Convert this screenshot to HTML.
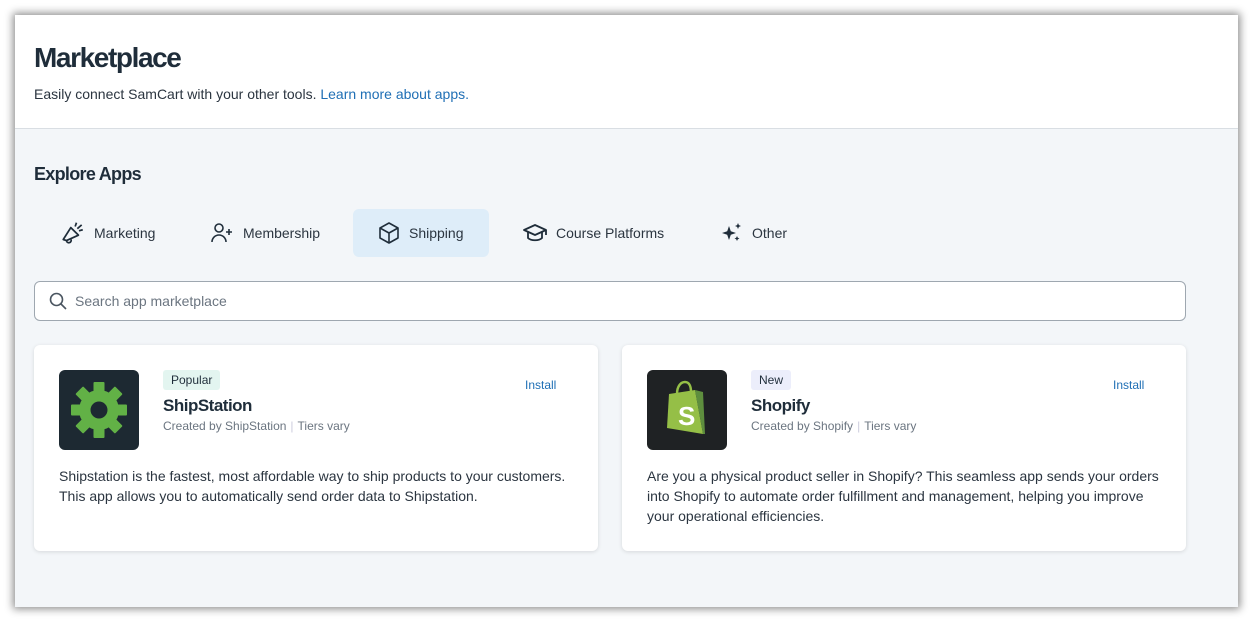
<!DOCTYPE html><html><head><style>
*{box-sizing:border-box;margin:0;padding:0}
body{width:1253px;height:623px;background:#fff;font-family:"Liberation Sans",sans-serif;position:relative;overflow:hidden;color:#1f2d3a}
.win{position:absolute;left:15px;top:15px;width:1223px;height:592px;background:#f3f6f9;box-shadow:0 0 8px 2px rgba(0,0,0,.45);overflow:hidden}
.hdr{position:absolute;left:0;top:0;width:100%;height:114px;background:#fff;border-bottom:1px solid #d9dee3}
.a{position:absolute;white-space:nowrap}
h1{position:absolute;left:19px;top:27px;font-size:28px;font-weight:700;letter-spacing:-1.4px;color:#1f2d3a}
.sub{left:19px;top:71px;font-size:14px;color:#2b3540}
.sub span{color:#1f6fb5}
.tab{position:absolute;top:194px;height:48px;display:flex;align-items:center;font-size:14px;color:#2b3540;padding:0 24px;border-radius:6px}
.tab svg{margin-right:8px}
.search{position:absolute;left:19px;top:266px;width:1152px;height:40px;border:1px solid #9ea7b0;border-radius:6px;background:#fff;font-size:14px;color:#6b7580;padding-left:40px;line-height:38px}
.card{position:absolute;top:330px;width:564px;height:206px;background:#fff;border-radius:6px;box-shadow:0 1px 4px rgba(0,0,0,.12)}
.logo{position:absolute;left:25px;top:25px;width:80px;height:80px;border-radius:6px}
.badge{position:absolute;left:129px;top:25px;height:20px;padding:0 8px;border-radius:3px;font-size:12px;line-height:20px;color:#1f2d3a}
.tt{left:129px;top:51px;font-size:17px;font-weight:700;letter-spacing:-.5px}
.by{left:129px;top:74px;font-size:12px;color:#6b7580}
.by i{font-style:normal;color:#ccd;margin:0 4px}
.ins{left:491px;top:33px;font-size:12px;color:#1f6fb5}
.desc{position:absolute;left:25px;top:121px;width:520px;font-size:14px;line-height:20px;color:#2b3540}
</style></head><body>
<div class="win">
<div class="hdr">
<h1>Marketplace</h1>
<div class="a sub">Easily connect SamCart with your other tools. <span>Learn more about apps.</span></div>
</div>
<div class="a" style="left:19px;top:149px;font-size:18px;font-weight:700;letter-spacing:-.7px">Explore Apps</div>

<div class="tab" style="left:21px"><svg width="26" height="26" viewBox="0 0 24 24" fill="none" stroke="#1f2d3a" stroke-width="1.6" stroke-linejoin="round"><path d="M3 18l7-11 7 7-11 5z"/><path d="M6 19.5a2.2 2.2 0 0 0 4.2-1.5"/><path d="M14 6l1.2-3.5M17.5 10l3.5-1M16 8l4-3.5"/></svg>Marketing</div>
<div class="tab" style="left:170px"><svg width="26" height="24" viewBox="0 0 26 24" fill="none" stroke="#1f2d3a" stroke-width="1.6"><circle cx="10" cy="7" r="4"/><path d="M3 21a7 7 0 0 1 14 0"/><path d="M20 8v6M17 11h6"/></svg>Membership</div>
<div class="tab" style="left:338px;width:136px;background:#deedf9"><svg width="24" height="24" viewBox="0 0 24 24" fill="none" stroke="#1f2d3a" stroke-width="1.6" stroke-linejoin="round"><path d="M12 2l9 5v10l-9 5-9-5V7z"/><path d="M3 7l9 5 9-5M12 12v10"/></svg>Shipping</div>
<div class="tab" style="left:483px"><svg width="26" height="24" viewBox="0 0 26 24" fill="none" stroke="#1f2d3a" stroke-width="1.8" stroke-linejoin="round"><path d="M2 9l11-5 11 5-11 5z"/><path d="M6 11v6c3 3 11 3 14 0v-6M24 9v5"/></svg>Course Platforms</div>
<div class="tab" style="left:681px"><svg width="24" height="24" viewBox="0 0 24 24" fill="#1f2d3a"><path d="M9 5l1.8 5.2L16 12l-5.2 1.8L9 19l-1.8-5.2L2 12l5.2-1.8z"/><path d="M18 2l.9 2.1L21 5l-2.1.9L18 8l-.9-2.1L15 5l2.1-.9z"/><path d="M17 15l.8 1.7 1.7.8-1.7.8L17 20l-.8-1.7-1.7-.8 1.7-.8z"/></svg>Other</div>

<div class="search"><svg style="position:absolute;left:14px;top:10px" width="18" height="18" viewBox="0 0 18 18" fill="none" stroke="#4a5560" stroke-width="1.6"><circle cx="7.5" cy="7.5" r="6"/><path d="M12 12l5 5"/></svg>Search app marketplace</div>

<div class="card" style="left:19px">
<div class="logo" style="background:#1d2932"><svg width="80" height="80" viewBox="0 0 80 80"><g fill="#62b146" transform="translate(40 40)"><circle r="20"/><g id="t"><rect x="-5.5" y="-28" width="11" height="12" rx="1"/></g><use href="#t" transform="rotate(45)"/><use href="#t" transform="rotate(90)"/><use href="#t" transform="rotate(135)"/><use href="#t" transform="rotate(180)"/><use href="#t" transform="rotate(225)"/><use href="#t" transform="rotate(270)"/><use href="#t" transform="rotate(315)"/></g><circle cx="40" cy="40" r="8.5" fill="#1d2932"/></svg></div>
<div class="badge" style="background:#e3f5f0">Popular</div>
<div class="a tt">ShipStation</div>
<div class="a by">Created by ShipStation<i>|</i>Tiers vary</div>
<div class="a ins">Install</div>
<div class="desc">Shipstation is the fastest, most affordable way to ship products to your customers. This app allows you to automatically send order data to Shipstation.</div>
</div>

<div class="card" style="left:607px">
<div class="logo" style="background:#1f2224"><svg width="80" height="80" viewBox="0 0 80 80"><path d="M22 24l26-4 8 44-36-6z" fill="#95bf47"/><path d="M48 20l8 2 2 42-2 0z" fill="#5e8e3e"/><path d="M30 24c0-8 4-12 8-12s6 4 6 10" fill="none" stroke="#95bf47" stroke-width="2.5"/><text x="31" y="55" font-family="Liberation Sans" font-weight="700" font-size="26" fill="#fff">S</text></svg></div>
<div class="badge" style="background:#eceefb">New</div>
<div class="a tt">Shopify</div>
<div class="a by">Created by Shopify<i>|</i>Tiers vary</div>
<div class="a ins">Install</div>
<div class="desc">Are you a physical product seller in Shopify? This seamless app sends your orders into Shopify to automate order fulfillment and management, helping you improve your operational efficiencies.</div>
</div>
</div>
</body></html>
